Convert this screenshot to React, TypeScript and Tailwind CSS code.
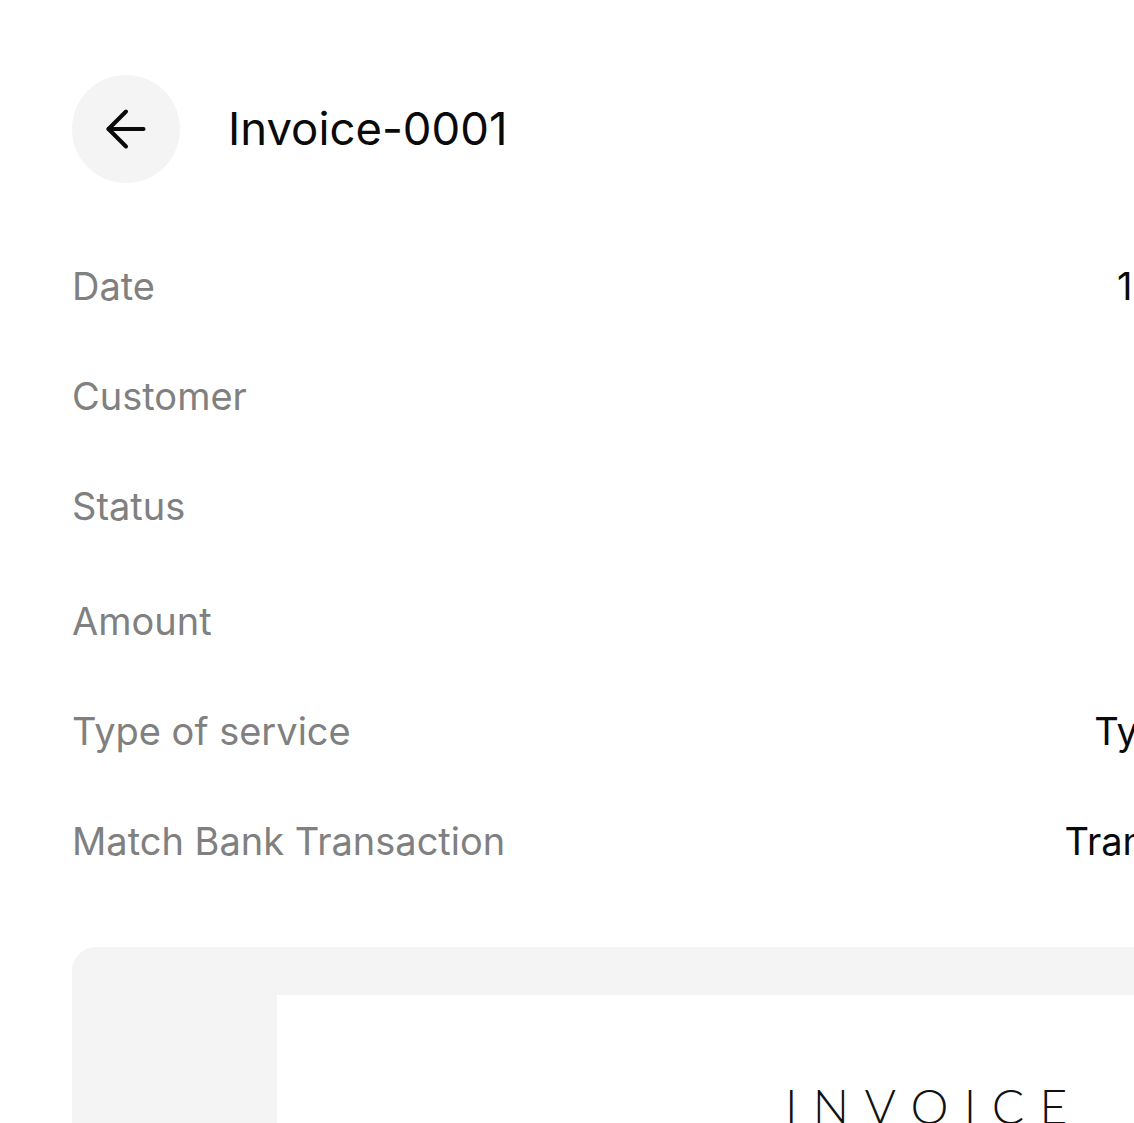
import React from "react";

function ArrowLeft() {
  return (
    <svg width="60" height="60" viewBox="0 0 24 24" fill="none" stroke="currentColor" strokeWidth="1.6" strokeLinecap="round" strokeLinejoin="round">
      <path d="m12 19-7-7 7-7" />
      <path d="M19 12H5" />
    </svg>
  );
}

const rows: { label: string; value: React.ReactNode }[] = [
  { label: "Date", value: "12/07/24" },
  { label: "Customer", value: "Acme" },
  {
    label: "Status",
    value: (
      <span className="flex h-[59px] items-center rounded-full bg-[#e7f6ec] px-[22px] text-[#1f8a4c]">Paid</span>
    ),
  },
  { label: "Amount", value: "$1,250" },
  { label: "Type of service", value: "Type A-12" },
  { label: "Match Bank Transaction", value: "Transaction" },
];

export default function App() {
  return (
    <div className="h-[1123px] w-full overflow-hidden bg-white font-['Inter',sans-serif]">
      <div className="w-[1347px] px-[72px] pt-[75px]">
        <div className="flex items-center gap-[48px]">
          <button className="flex size-[108px] items-center justify-center rounded-full bg-[#f4f4f4] text-[#0a0a0a]">
            <ArrowLeft />
          </button>
          <h1 className="text-[45.5px] leading-none font-normal text-[#0a0a0a]">Invoice-0001</h1>
        </div>

        <div className="mt-[48px] flex flex-col">
          {rows.map((r) => (
            <div key={r.label} className="flex items-start justify-between py-[28px] text-[38px] leading-[54px]">
              <span className="text-[#808080]">{r.label}</span>
              <span className="whitespace-nowrap text-[#0a0a0a]">{r.value}</span>
            </div>
          ))}
        </div>

        <div className="mt-[51px] rounded-[24px] bg-[#f4f4f4] pl-[205px] pr-[100px] pt-[48px]">
          <div className="h-[600px] bg-white pl-[508px] pt-[87px]">
            <div className="font-['Lato',sans-serif] text-[48px] leading-none font-light tracking-[0.32em] text-[#111]">
              INVOICE
            </div>
          </div>
        </div>
      </div>
    </div>
  );
}
